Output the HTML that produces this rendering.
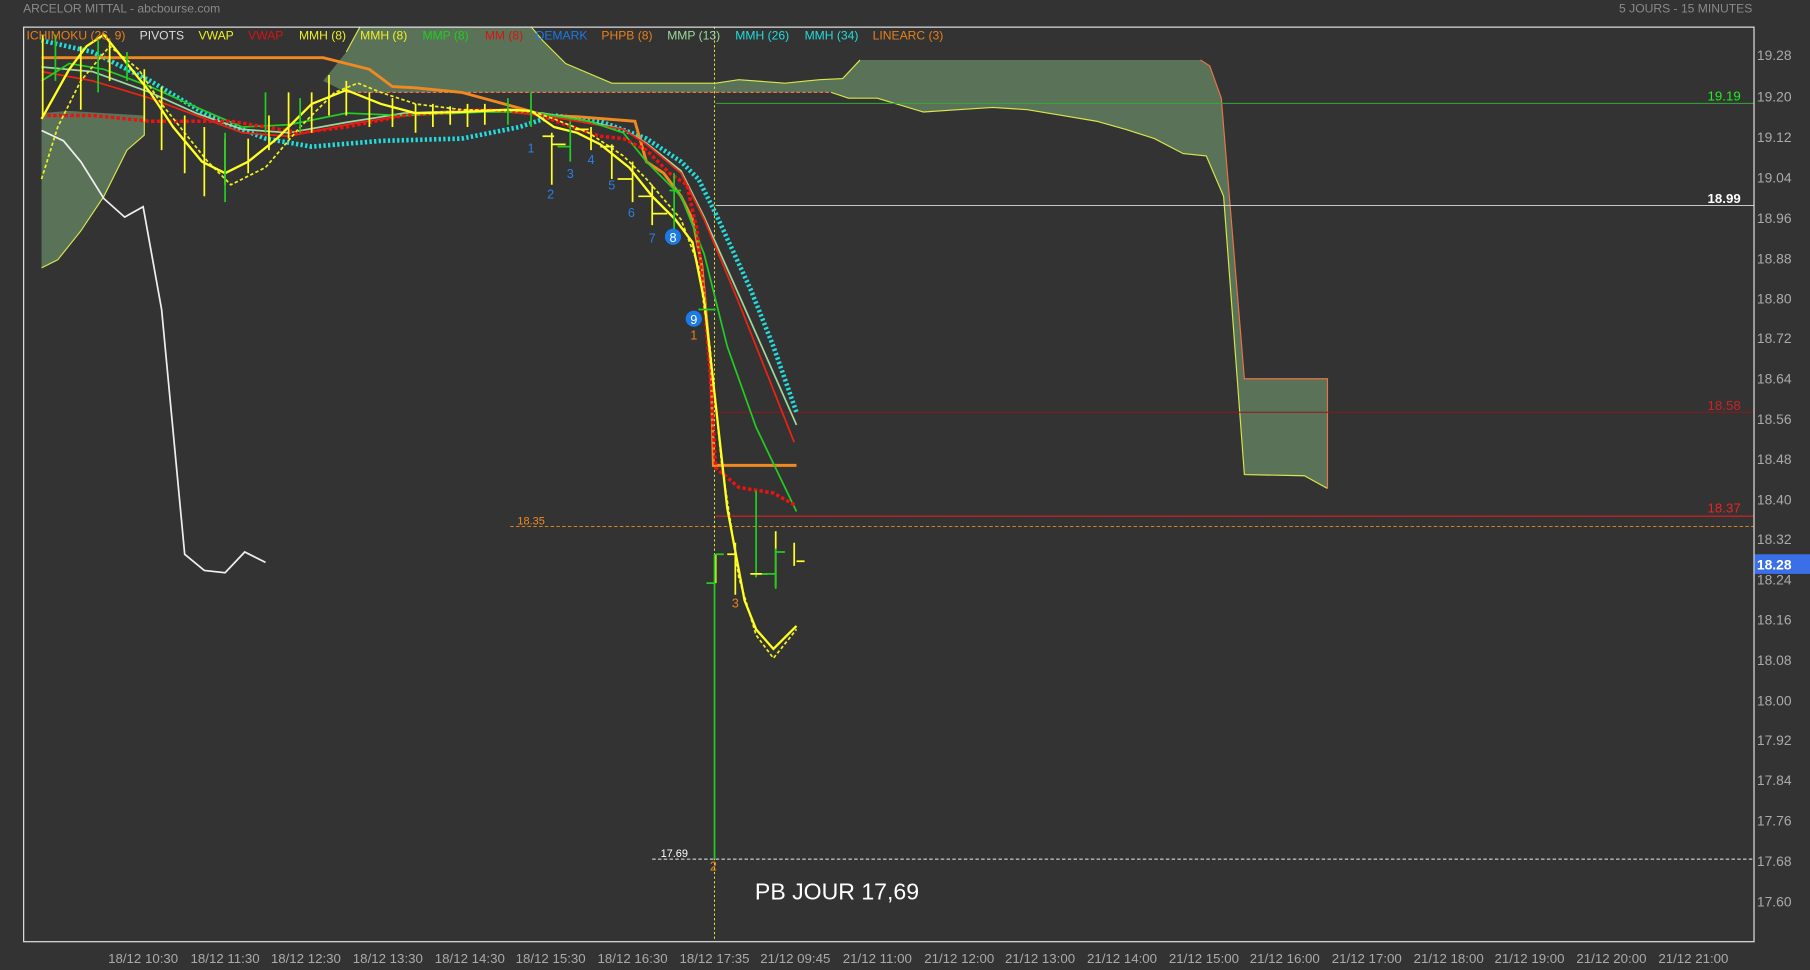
<!DOCTYPE html>
<html><head><meta charset="utf-8"><style>
html,body{margin:0;padding:0;background:#333;width:1810px;height:970px;overflow:hidden}
svg{display:block}
text{font-family:"Liberation Sans",sans-serif}
</style></head><body>
<svg width="1810" height="970" viewBox="0 0 1568 840" preserveAspectRatio="none" xmlns="http://www.w3.org/2000/svg">
<rect width="1568" height="840" fill="#333"/>
<text x="20" y="11" font-size="10.5" fill="#8a8a8a">ARCELOR MITTAL - abcbourse.com</text>
<text x="1518" y="11" font-size="10.5" fill="#8a8a8a" text-anchor="end">5 JOURS - 15 MINUTES</text>
<!-- clouds -->
<polygon fill="#5a7358" points="36,98 60,96 90,98 125,100 125,117 110,130 90,170 70,200 50,225 36,232"/>
<polygon fill="#5a7358" points="280,70 300,45 312,23 460,23 470,35 490,55 530,72 620,72 640,69 680,72 700,70 710,69 730,68 745,52 1040,52 1048,57 1058,85 1078,328 1150,328 1150,423 1130,412 1078,411 1060,170 1045,135 1025,133 1000,120 975,112 950,105 920,100 890,95 860,93 830,95 800,97 760,85 735,85 720,80 300,80"/>
<polyline fill="none" stroke="#d7e84a" stroke-width="1" points="300,45 312,23 M"/>
<polyline fill="none" stroke="#d7e84a" stroke-width="1" points="460,23 470,35 490,55 530,72 620,72 640,69 680,72 700,70 710,69 730,68 745,52"/>
<polyline fill="none" stroke="#d7e84a" stroke-width="1" points="720,80 735,85 760,85 800,97 830,95 860,93 890,95 920,100 950,105 975,112 1000,120 1025,133 1045,135 1060,170 1078,411 1130,412 1150,423"/>
<polyline fill="none" stroke="#e8744a" stroke-width="1" stroke-dasharray="3,2" points="300,80 720,80"/>
<polyline fill="none" stroke="#e8744a" stroke-width="1" points="1040,52 1048,57 1058,85 1078,328 1150,328 1150,423"/>
<polyline fill="none" stroke="#d7e84a" stroke-width="1" points="125,100 125,117 110,130 90,170 70,200 50,225 36,232"/>
<!-- horizontal levels -->
<line x1="620" y1="89.5" x2="1519" y2="89.5" stroke="#3a3" stroke-width="0.8"/>
<line x1="620" y1="178" x2="1519" y2="178" stroke="#ddd" stroke-width="0.8"/>
<line x1="620" y1="357" x2="1519" y2="357" stroke="#8b1a1a" stroke-width="0.8"/>
<line x1="620" y1="447" x2="1519" y2="447" stroke="#e02020" stroke-width="1"/>
<line x1="442" y1="456" x2="1519" y2="456" stroke="#f08a20" stroke-width="0.8" stroke-dasharray="3,2"/>
<line x1="565" y1="744" x2="1519" y2="744" stroke="#eee" stroke-width="0.8" stroke-dasharray="3,2"/>
<line x1="619" y1="23" x2="619" y2="815" stroke="#ee3" stroke-width="0.8" stroke-dasharray="2,2"/>
<text x="1508" y="87" font-size="11.5" fill="#2e2" text-anchor="end">19.19</text>
<text x="1508" y="176" font-size="11.5" fill="#fff" text-anchor="end" font-weight="bold">18.99</text>
<text x="1508" y="355" font-size="11.5" fill="#c22" text-anchor="end">18.58</text>
<text x="1508" y="444" font-size="11.5" fill="#e22" text-anchor="end">18.37</text>
<text x="472" y="454" font-size="9.5" fill="#f08a20" text-anchor="end">18.35</text>
<text x="596" y="742" font-size="9.5" fill="#fff" text-anchor="end">17.69</text>
<!-- pivot white -->
<polyline fill="none" stroke="#eee" stroke-width="1.5" points="36,113 55,122 70,140 90,172 108,188 124,179 140,268 160,480 177,494 195,496 212,478 230,487"/>
<!-- cyan dotted -->
<polyline fill="none" stroke="#2dd" stroke-width="4" stroke-dasharray="2,2" points="36,35 80,45 130,70 180,100 230,120 270,127 330,122 400,120 450,110 480,100 520,105 560,120 590,140 605,155 620,185 650,250 670,300 690,357"/>
<!-- orange -->
<polyline fill="none" stroke="#f08a20" stroke-width="2.5" points="36,50 155,50 280,50 320,60 340,75 360,76 400,80 455,95 470,100 500,101 550,105 560,140 575,150 590,170 600,190 608,230 616,320 618,403 690,403"/>
<!-- light green 13 -->
<polyline fill="none" stroke="#9ed89e" stroke-width="1.5" points="36,58 80,62 130,80 170,98 210,112 250,115 300,106 350,98 430,95 470,98 500,103 540,112 560,124 590,148 610,188 640,255 690,368"/>
<!-- red MM -->
<polyline fill="none" stroke="#e21" stroke-width="1.5" points="36,62 80,70 130,85 170,100 210,115 250,118 300,108 350,100 430,96 470,100 500,105 540,112 560,125 590,150 610,190 640,262 688,383"/>
<!-- green MMP -->
<polyline fill="none" stroke="#2c2" stroke-width="1.5" points="36,70 60,55 90,60 130,75 175,95 210,110 250,108 300,98 350,100 420,97 460,97 510,105 540,115 560,140 590,170 610,220 630,300 655,370 690,443"/>
<!-- red dotted -->
<polyline fill="none" stroke="#e11" stroke-width="3" stroke-dasharray="3,2" points="36,100 80,100 130,105 200,105 260,115 300,110 350,100 420,95 460,97 490,108 520,118 540,120 560,130 580,150 595,160 604,200 610,260 615,320 620,405 640,422 670,427 688,437"/>
<!-- yellow dashed -->
<polyline fill="none" stroke="#ee2" stroke-width="1.5" stroke-dasharray="3,2" points="36,155 50,110 70,70 95,40 120,60 140,90 160,115 180,140 200,160 230,145 260,110 290,80 310,72 330,80 360,90 400,95 460,96 480,103 510,115 540,135 560,155 590,190 605,230 615,300 625,400 640,500 655,550 670,570 690,545"/>
<!-- yellow main -->
<polyline fill="none" stroke="#ff2" stroke-width="2" points="36,103 60,60 75,40 90,30 110,55 130,80 150,110 175,140 195,150 215,140 240,120 270,90 300,78 330,90 360,98 400,97 440,95 460,96 480,110 500,115 520,125 545,145 565,170 585,190 600,210 610,260 620,350 630,440 645,520 655,545 670,562 690,542"/>
<!-- bars -->
<g stroke-width="1.5" fill="none">
<path stroke="#ff2" d="M37,30V100 M70,40V95 M95,35V70 M125,60V105 M140,75V130 M160,100V150 M177,110V170 M195,120V160 M215,120V150 M233,100V130 M250,80V120 M270,80V115 M285,65V100 M300,70V100 M320,80V110 M340,85V110 M360,90V115 M375,90V110 M390,92V108 M405,90V110 M420,90V108 M478,115V160 M512,110V130 M530,125V155 M548,140V175 M565,160V195 M620,480V505 M637,470V515 M672,460V508 M688,470V490"/>
<path stroke="#2c2" d="M48,30V70 M85,35V80 M110,45V70 M195,115V175 M230,80V115 M260,85V115 M440,85V108 M460,80V110 M494,105V140 M584,150V200 M619,480V744 M655,425V500 M672,475V510"/>
<path stroke="#ff2" d="M470,118H480 M478,125H490 M498,112H510 M520,127H532 M535,155H548 M553,170H565 M565,185H578 M630,480H638 M650,497H665 M690,486H697"/>
<path stroke="#2c2" d="M483,127H494 M580,165H590 M605,268H620 M612,505H619 M620,480H627 M660,497H672 M672,478H680"/>
</g>
<!-- demark -->
<g font-size="11" fill="#2a7fe0" text-anchor="middle">
<text x="460" y="132">1</text><text x="477" y="172">2</text><text x="494" y="154">3</text><text x="512" y="142">4</text><text x="530" y="164">5</text><text x="547" y="188">6</text><text x="565" y="210">7</text>
</g>
<circle cx="583" cy="205" r="7" fill="#1a7ae8"/><text x="583" y="209.5" font-size="11" fill="#fff" text-anchor="middle">8</text>
<circle cx="601" cy="276" r="7" fill="#1a7ae8"/><text x="601" y="280.5" font-size="11" fill="#fff" text-anchor="middle">9</text>
<g font-size="11" fill="#e8801a" text-anchor="middle"><text x="601" y="294">1</text><text x="637" y="526">3</text><text x="618" y="754">2</text></g>
<text x="654" y="779" font-size="20" fill="#fff">PB JOUR 17,69</text>
<!-- frame -->
<rect x="20.5" y="23.5" width="1499" height="792" fill="none" stroke="#e8e8e8" stroke-width="1"/>
<!-- legend -->
<text y="34" font-size="10.5">
<tspan x="23" fill="#e8801a">ICHIMOKU (26, 9)</tspan><tspan x="121" fill="#ddd">PIVOTS</tspan><tspan x="172" fill="#ee2">VWAP</tspan><tspan x="215" fill="#d11">VWAP</tspan><tspan x="259" fill="#ee2">MMH (8)</tspan><tspan x="312" fill="#ee2">MMH (8)</tspan><tspan x="366" fill="#2c2">MMP (8)</tspan><tspan x="420" fill="#d11">MM (8)</tspan><tspan x="464" fill="#1a7ae8">DEMARK</tspan><tspan x="521" fill="#e8801a">PHPB (8)</tspan><tspan x="578" fill="#9ed89e">MMP (13)</tspan><tspan x="637" fill="#2dd">MMH (26)</tspan><tspan x="697" fill="#2dd">MMH (34)</tspan><tspan x="756" fill="#e8801a">LINEARC (3)</tspan>
</text>
<!-- y axis -->
<g font-size="12" fill="#aaa">
<text x="1522" y="52">19.28</text><text x="1522" y="88">19.20</text><text x="1522" y="123">19.12</text><text x="1522" y="158">19.04</text><text x="1522" y="193">18.96</text><text x="1522" y="228">18.88</text><text x="1522" y="263">18.80</text><text x="1522" y="297">18.72</text><text x="1522" y="332">18.64</text><text x="1522" y="367">18.56</text><text x="1522" y="402">18.48</text><text x="1522" y="437">18.40</text><text x="1522" y="471">18.32</text><text x="1522" y="506">18.24</text><text x="1522" y="541">18.16</text><text x="1522" y="576">18.08</text><text x="1522" y="611">18.00</text><text x="1522" y="645">17.92</text><text x="1522" y="680">17.84</text><text x="1522" y="715">17.76</text><text x="1522" y="750">17.68</text><text x="1522" y="785">17.60</text>
</g>
<rect x="1520" y="480" width="48" height="17" fill="#3a6fe8"/>
<text x="1522" y="493" font-size="12" fill="#fff" font-weight="bold">18.28</text>
<!-- x axis -->
<g font-size="11.5" fill="#aaa" text-anchor="middle">
<text x="124" y="834">18/12 10:30</text><text x="195" y="834">18/12 11:30</text><text x="265" y="834">18/12 12:30</text><text x="336" y="834">18/12 13:30</text><text x="407" y="834">18/12 14:30</text><text x="477" y="834">18/12 15:30</text><text x="548" y="834">18/12 16:30</text><text x="619" y="834">18/12 17:35</text><text x="689" y="834">21/12 09:45</text><text x="760" y="834">21/12 11:00</text><text x="831" y="834">21/12 12:00</text><text x="901" y="834">21/12 13:00</text><text x="972" y="834">21/12 14:00</text><text x="1043" y="834">21/12 15:00</text><text x="1113" y="834">21/12 16:00</text><text x="1184" y="834">21/12 17:00</text><text x="1255" y="834">21/12 18:00</text><text x="1325" y="834">21/12 19:00</text><text x="1396" y="834">21/12 20:00</text><text x="1467" y="834">21/12 21:00</text>
</g>
</svg>
</body></html>
